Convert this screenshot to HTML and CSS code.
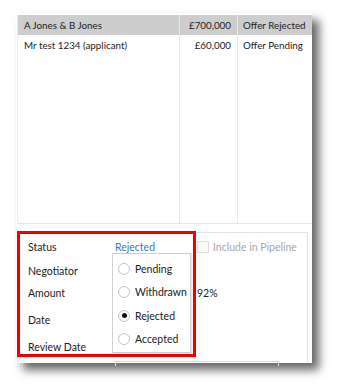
FILE: index.html
```html
<!DOCTYPE html>
<html>
<head>
<meta charset="utf-8">
<link rel="stylesheet" href="styles.css">
</head>
<body>
<div class="window">
  <div class="list">
    <div class="col col-name">
      <div class="cell head">A Jones &amp; B Jones</div>
      <div class="cell">Mr test 1234 (applicant)</div>
    </div>
    <div class="col col-amount">
      <div class="cell head">£700,000</div>
      <div class="cell">£60,000</div>
    </div>
    <div class="col col-status">
      <div class="cell head">Offer Rejected</div>
      <div class="cell">Offer Pending</div>
    </div>
  </div>
  <div class="panel">
    <div class="row r-status">
      <span class="label">Status</span>
      <span class="value link">Rejected</span>
      <span class="pipeline"><span class="checkbox"></span>Include in Pipeline</span>
    </div>
    <div class="row r-neg"><span class="label">Negotiator</span></div>
    <div class="row r-amount"><span class="label">Amount</span><span class="value"></span><span class="pct">92%</span></div>
    <div class="row r-date"><span class="label">Date</span></div>
    <div class="row r-review"><span class="label">Review Date</span><span class="field"></span></div>

    <div class="dropdown">
      <div class="opt"><span class="radio"></span>Pending</div>
      <div class="opt"><span class="radio"></span>Withdrawn</div>
      <div class="opt"><span class="radio checked"></span>Rejected</div>
      <div class="opt"><span class="radio"></span>Accepted</div>
    </div>
    <div class="highlight"></div>
  </div>
</div>
</body>
</html>
```
FILE: styles.css
```css
html, body {
  margin: 0;
  padding: 0;
  background: #fff;
}
body {
  font-family: Lato, "Noto Sans", sans-serif;
  font-size: 10.5px;
  color: #222;
  width: 340px;
  height: 390px;
  overflow: hidden;
}
.window {
  margin: 13px 0 0 16px;
  width: 296px;
  height: 350px;
  background: #fff;
  box-shadow: 7px 7px 9px rgba(0, 0, 0, 0.6);
  display: flex;
  flex-direction: column;
  position: relative;
}
.list {
  margin: 2px 0 0 1px;
  height: 208px;
  display: flex;
  border-bottom: 1px solid #e6e6e6;
  border-left: 1px solid #eeeeee;
}
.col {
  display: flex;
  flex-direction: column;
}
.col-name { flex: none; width: 161px; }
.col-amount { flex: none; width: 57px; border-left: 1px solid #e8e8e8; }
.col-status { flex: 1; min-width: 0; border-left: 1px solid #e8e8e8; }
.cell {
  height: 20px;
  line-height: 20px;
  padding: 0 6px;
  font-size: 9.8px;
  white-space: nowrap;
}
.cell.head {
  background: #cdcdcd;
}
.col-amount .cell { text-align: right; }
.col-status .cell { padding-left: 5px; padding-right: 0; }
.panel {
  margin: 8px 4px 0 1px;
  flex: 1;
  border: 1px solid #e4e4e4;
  border-bottom: none;
  position: relative;
  padding: 2px 0 0 10px;
  display: flex;
  flex-direction: column;
}
.row {
  display: flex;
  align-items: center;
  position: relative;
  white-space: nowrap;
}
.r-status { height: 24px; }
.r-neg { height: 24px; }
.r-amount { height: 20px; }
.r-date { height: 34px; }
.r-review { height: 20px; }
.label {
  width: 87px;
  flex: none;
}
.value {
  width: 82px;
  flex: none;
}
.link {
  color: #3b78c4;
}
.pipeline {
  color: #a8a8a8;
  display: flex;
  align-items: center;
  white-space: nowrap;
}
.checkbox {
  flex: none;
  width: 10px;
  height: 10px;
  border: 1px solid #dcdcdc;
  margin-right: 4px;
  background: #fafafa;
}
.pct {
  color: #222;
}
.field {
  position: absolute;
  left: 87px;
  top: 24px;
  width: 162px;
  height: 4px;
  border-top: 1px solid #d8d8d8;
  border-left: 1px solid #e4e4e4;
  border-right: 1px solid #e4e4e4;
}
.dropdown {
  position: absolute;
  left: 94px;
  top: 20px;
  width: 79px;
  height: 100px;
  background: #fff;
  border: 1px solid #d0d0d0;
  box-shadow: 1px 1px 2px rgba(0, 0, 0, 0.15);
  padding-top: 3px;
  box-sizing: border-box;
}
.opt {
  height: 23.5px;
  display: flex;
  align-items: center;
  padding-left: 5px;
  white-space: nowrap;
}
.radio {
  flex: none;
  width: 10px;
  height: 10px;
  border: 1px solid #c4c4c4;
  border-radius: 50%;
  margin-right: 5px;
  display: flex;
  align-items: center;
  justify-content: center;
}
.radio.checked::after {
  content: "";
  width: 5px;
  height: 5px;
  border-radius: 50%;
  background: #111;
}
.highlight {
  position: absolute;
  left: -1px;
  top: -2px;
  width: 173px;
  height: 120px;
  border: 3px solid #ee0000;
}
```
